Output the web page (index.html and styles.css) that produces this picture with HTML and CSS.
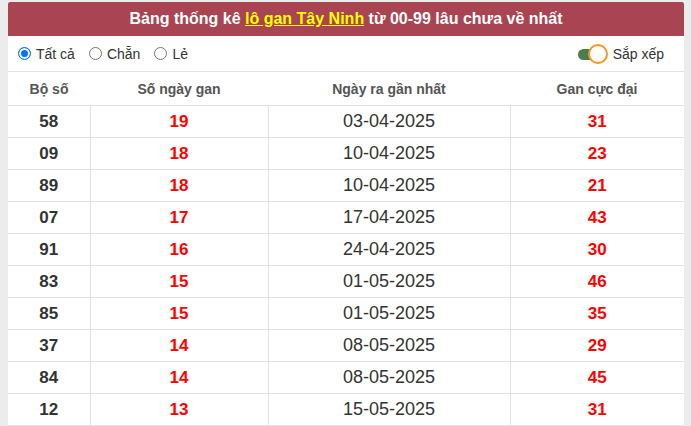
FILE: index.html
```html
<!DOCTYPE html>
<html lang="vi">
<head>
<meta charset="utf-8">
<link rel="stylesheet" href="styles.css">
</head>
<body>
<div class="box">
  <div class="title">Bảng thống kê <a href="#" class="hl">lô gan Tây Ninh</a> từ 00-99 lâu chưa về nhất</div>
  <div class="filters">
    <div class="radios">
      <label class="radio"><span class="dot on"></span>Tất cả</label>
      <label class="radio"><span class="dot"></span>Chẵn</label>
      <label class="radio"><span class="dot"></span>Lẻ</label>
    </div>
    <div class="sort"><span class="toggle"><span class="track"></span><span class="knob"></span></span>Sắp xếp</div>
  </div>
  <table class="tbl">
    <thead>
      <tr><th class="c1">Bộ số</th><th class="c2">Số ngày gan</th><th class="c3">Ngày ra gần nhất</th><th class="c4">Gan cực đại</th></tr>
    </thead>
    <tbody>
      <tr><td class="num">58</td><td class="red">19</td><td class="date">03-04-2025</td><td class="red">31</td></tr>
      <tr><td class="num">09</td><td class="red">18</td><td class="date">10-04-2025</td><td class="red">23</td></tr>
      <tr><td class="num">89</td><td class="red">18</td><td class="date">10-04-2025</td><td class="red">21</td></tr>
      <tr><td class="num">07</td><td class="red">17</td><td class="date">17-04-2025</td><td class="red">43</td></tr>
      <tr><td class="num">91</td><td class="red">16</td><td class="date">24-04-2025</td><td class="red">30</td></tr>
      <tr><td class="num">83</td><td class="red">15</td><td class="date">01-05-2025</td><td class="red">46</td></tr>
      <tr><td class="num">85</td><td class="red">15</td><td class="date">01-05-2025</td><td class="red">35</td></tr>
      <tr><td class="num">37</td><td class="red">14</td><td class="date">08-05-2025</td><td class="red">29</td></tr>
      <tr><td class="num">84</td><td class="red">14</td><td class="date">08-05-2025</td><td class="red">45</td></tr>
      <tr><td class="num">12</td><td class="red">13</td><td class="date">15-05-2025</td><td class="red">31</td></tr>
    </tbody>
  </table>
</div>
</body>
</html>
```
FILE: styles.css
```css
html, body {
  margin: 0;
  padding: 0;
  background: #ececec;
  font-family: "Liberation Sans", Arial, sans-serif;
  color: #333;
}
.box {
  width: 676px;
  margin: 2px 0 0 8px;
  background: #fff;
}
.title {
  background: #a94452;
  color: #fff;
  font-weight: bold;
  font-size: 16px;
  text-align: center;
  height: 34px;
  line-height: 34px;
  border-radius: 2px 2px 0 0;
}
.title .hl {
  color: #ffff00;
  text-decoration: underline;
}
.filters {
  height: 35px;
  border-bottom: 1px solid #e2e2e2;
  display: flex;
  align-items: center;
  justify-content: space-between;
  padding: 0 20px 0 10px;
  font-size: 14px;
  color: #333;
}
.radios {
  display: flex;
  gap: 14px;
}
.radio {
  display: flex;
  align-items: center;
  gap: 5px;
}
.dot {
  width: 11px;
  height: 11px;
  border: 1px solid #767676;
  border-radius: 50%;
  box-sizing: content-box;
  background: #fff;
}
.dot.on {
  border: 1px solid #0075ff;
  background: #0075ff;
  box-shadow: inset 0 0 0 2px #fff;
}
.sort {
  display: flex;
  align-items: center;
  gap: 2px;
}
.toggle {
  position: relative;
  width: 33px;
  height: 20px;
  display: inline-block;
}
.track {
  position: absolute;
  left: 0;
  top: 5px;
  width: 22px;
  height: 11px;
  border-radius: 6px;
  background: #4b7d4f;
}
.knob {
  position: absolute;
  left: 10px;
  top: 0;
  width: 16px;
  height: 16px;
  border-radius: 50%;
  border: 2px solid #f7931e;
  background: #fff;
}
.tbl {
  width: 100%;
  border-collapse: collapse;
  table-layout: fixed;
}
.tbl th {
  height: 33px;
  font-size: 14px;
  font-weight: bold;
  color: #555;
  border-bottom: 1px solid #e2e2e2;
  padding: 0;
}
.c1 { width: 82px; }
.c2 { width: 178px; }
.c3 { width: 242px; }
.tbl td {
  height: 31px;
  padding: 0;
  text-align: center;
  border-bottom: 1px solid #e2e2e2;
  border-left: 1px solid #e2e2e2;
}
.tbl td:first-child { border-left: none; }
.num {
  font-weight: bold;
  font-size: 17px;
  color: #333;
}
.red {
  font-weight: bold;
  font-size: 17px;
  color: #ff0000;
}
.date {
  font-size: 18px;
  color: #333;
}
```
